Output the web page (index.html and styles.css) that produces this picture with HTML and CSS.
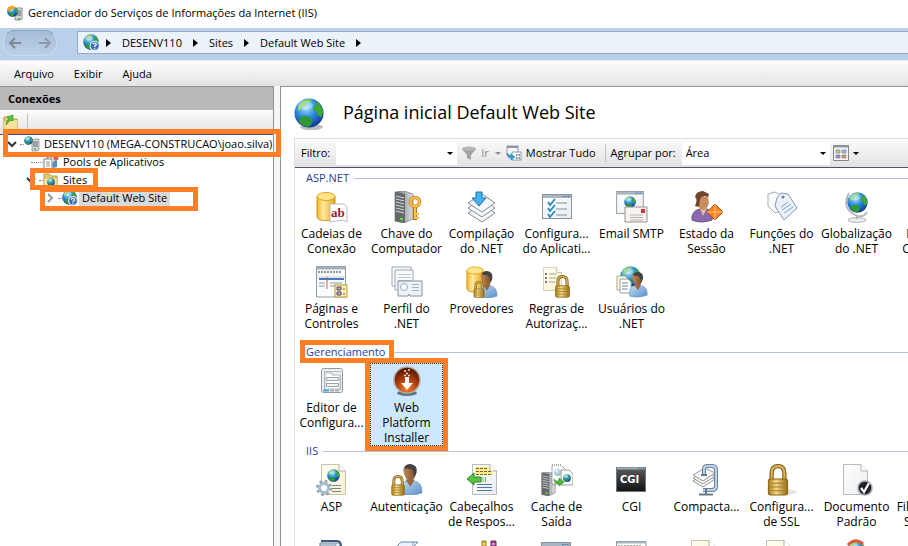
FILE: index.html
```html
<!DOCTYPE html>
<html lang="pt-BR">
<head>
<meta charset="utf-8">
<title>Gerenciador do Serviços de Informações da Internet (IIS)</title>
<link rel="stylesheet" href="styles.css">
</head>
<body>
<svg class="defs" aria-hidden="true">
  <defs>
    <radialGradient id="g-sea" cx=".4" cy=".3" r=".75"><stop offset="0" stop-color="#a9e4fb"/><stop offset=".45" stop-color="#2f8ede"/><stop offset="1" stop-color="#0c2f94"/></radialGradient>
    <linearGradient id="g-gold"><stop offset="0" stop-color="#f3b52c"/><stop offset=".35" stop-color="#ffeaa0"/><stop offset="1" stop-color="#eca414"/></linearGradient>
    <linearGradient id="g-brass"><stop offset="0" stop-color="#a87c1c"/><stop offset=".4" stop-color="#f3d98a"/><stop offset="1" stop-color="#946a12"/></linearGradient>
    <linearGradient id="g-steel"><stop offset="0" stop-color="#6d7073"/><stop offset=".5" stop-color="#a5a8aa"/><stop offset="1" stop-color="#dcdedf"/></linearGradient>
    <linearGradient id="g-shirt" x2="1" y2="1"><stop offset="0" stop-color="#c3dcf3"/><stop offset="1" stop-color="#5b8fc8"/></linearGradient>
    <linearGradient id="g-skin"><stop offset="0" stop-color="#c08a58"/><stop offset="1" stop-color="#7c4d2c"/></linearGradient>
    <linearGradient id="g-page" x2="1" y2="1"><stop offset="0" stop-color="#fff"/><stop offset="1" stop-color="#e9ecef"/></linearGradient>
    <linearGradient id="g-cream" x2="1" y2="1"><stop offset="0" stop-color="#fffef4"/><stop offset="1" stop-color="#f8f1cc"/></linearGradient>
    <linearGradient id="g-dark" x2="0" y2="1"><stop offset="0" stop-color="#5b5d5f"/><stop offset="1" stop-color="#111"/></linearGradient>
    <radialGradient id="g-rust" cx=".5" cy=".85" r=".8"><stop offset="0" stop-color="#f07a2c"/><stop offset=".55" stop-color="#a83b0c"/><stop offset="1" stop-color="#4e1806"/></radialGradient>
  </defs>
  <symbol id="globe" viewBox="0 0 32 32">
    <circle cx="16" cy="16" r="15.500" fill="url(#g-sea)"/>
    <path d="M7 6Q10 2 15 1L19 2 17 5 13 4 13 8 9 9 8 12 4 14Q3 10 7 6Z" fill="#7fcf55"/>
    <path d="M23 3Q30 7 31 15L29 21 26 19 24 14 20 13 21 9 24 8Z" fill="#3fa535"/>
    <path d="M7 20L14 19 20 24 18 29 14 31Q7 29 5 24Z" fill="#2f9a33"/>
    <ellipse cx="12" cy="8" rx="8" ry="5" fill="#fff" opacity=".3"/>
  </symbol>
  <symbol id="question" viewBox="0 0 16 16">
    <circle cx="8" cy="8" r="7" fill="#3f66b8" stroke="#dce8f8" stroke-width="2"/>
    <path d="M5.500 6Q5.500 4 8 4T10.500 6Q10.500 7.500 8 8.500V10M8 11V13" fill="none" stroke="#fff" stroke-width="1.800"/>
  </symbol>
  <symbol id="site" viewBox="0 0 16 16">
    <use href="#globe" width="15" height="15" y="0"/><use href="#question" x="6" y="6" width="10" height="10"/>
  </symbol>
  <symbol id="server-globe" viewBox="0 0 16 16">
    <path d="M8 4L10 3H15V14L13 15H8Z" fill="#d3d6d8" stroke="#8b9094" stroke-width=".8"/>
    <path d="M9 6H14M9 8H14M9 10H14" stroke="#666b6f" stroke-width="1"/><path d="M10 13H12" stroke="#35c635" stroke-width="1.400"/>
    <use href="#globe" width="9" height="9"/>
  </symbol>
  <symbol id="lock" viewBox="0 0 20 30">
    <path d="M4 15V9Q4 2 10 2T16 9V15" fill="none" stroke="#7a5a12" stroke-width="4"/>
    <path d="M4 15V9Q4 2 10 2T16 9V15" fill="none" stroke="#d9b458" stroke-width="2"/>
    <rect x="1" y="14" width="18" height="15" rx="2" fill="url(#g-brass)" stroke="#8c6412"/>
    <path d="M1 18H19M1 21.500H19M1 25H19" stroke="#a97f24"/>
  </symbol>
  <symbol id="cylinder" viewBox="0 0 20 30">
    <path d="M1 5V25Q1 29 10 29T19 25V5Z" fill="url(#g-gold)" stroke="#d4930f"/>
    <ellipse cx="10" cy="5" rx="9" ry="4" fill="#ffe48a" stroke="#e3a51e"/>
  </symbol>
  <symbol id="person" viewBox="0 0 24 30">
    <path d="M2 29Q0 18 9 16L15 16Q24 18 23 28Q12 32 2 29Z" fill="url(#g-shirt)" stroke="#6c94bf" stroke-width=".6"/>
    <path d="M7 15L12 22 16 15Z" fill="#9a673d"/>
    <path d="M5 6Q5 1 11 1T17 7Q17 16 11 17Q6 14 5 6Z" fill="url(#g-skin)"/>
    <path d="M6 4Q7 0 12 0Q19 1 18 8L16 13Q15 7 13 5Z" fill="#454240"/>
  </symbol>
  <symbol id="window" viewBox="0 0 30 25">
    <rect x=".5" y=".5" width="29" height="24" fill="url(#g-page)" stroke="#8b959f"/>
    <rect x="1" y="1" width="28" height="3" fill="#a9b6c2"/><path d="M21 2.500H28" stroke="#3c70a8" stroke-dasharray="1.500 1"/>
  </symbol>
  <symbol id="page" viewBox="0 0 25 31">
    <path d="M.5 .5H18L24.500 7V30.500H.5Z" fill="url(#g-page)" stroke="#b8bcc0"/><path d="M18 .5V7H24.500" fill="#fff" stroke="#aeb2b6"/>
  </symbol>
  <symbol id="cream-page" viewBox="0 0 25 31">
    <path d="M.5 .5H18L24.500 7V30.500H.5Z" fill="url(#g-cream)" stroke="#c4c1ac"/><path d="M18 .5V7H24.500" fill="#fff" stroke="#b6b3a0"/>
  </symbol>
  <symbol id="server" viewBox="0 0 20 32">
    <path d="M1 1L10 0 19 3V28L10 32 1 30Z" fill="url(#g-steel)" stroke="#777b7e" stroke-width=".7"/>
    <path d="M1 1L11 3V32L1 30Z" fill="#65696c"/>
    <path d="M2 5L10 7M2 8L10 10M2 11L10 13M2 14L10 16M2 17L10 19M2 20L10 22" stroke="#d5d8da"/>
    <rect x="6" y="27" width="3" height="2" fill="#53e332"/>
  </symbol>
</svg>

<header>
  <div class="titlebar">
    <svg class="i16" viewBox="0 0 16 16"><path d="M8 4L10 3H15V14L13 15H8Z" fill="#d3d6d8" stroke="#8b9094"/><path d="M9 6H14M9 8H14M9 10H14" stroke="#63686c"/><path d="M11 14H13" stroke="#35c635" stroke-width="2"/><use href="#globe" y="1" width="11" height="11"/><path d="M0 4Q2 0 7 1L9 3 5 4 3 7Z" fill="#f3a72c"/></svg>
    <span>Gerenciador do Serviços de Informações da Internet (IIS)</span>
  </div>
  <nav class="navbar" aria-label="Navegação">
    <div class="history">
      <button aria-label="Voltar"><svg viewBox="0 0 14 14"><path d="M13 7H2M7 2L2 7 7 12" fill="none" stroke="#7d8790" stroke-width="2"/></svg></button>
      <button aria-label="Avançar"><svg viewBox="0 0 14 14"><path d="M1 7H12M7 2L12 7 7 12" fill="none" stroke="#909ba6" stroke-width="2"/></svg></button>
    </div>
    <div class="address">
      <svg class="i17"><use href="#site"/></svg>
      <svg class="sep" viewBox="0 0 5 8"><path d="M0 0L5 4 0 8Z"/></svg>
      <a href="#">DESENV110</a>
      <svg class="sep" viewBox="0 0 5 8"><path d="M0 0L5 4 0 8Z"/></svg>
      <a href="#">Sites</a>
      <svg class="sep" viewBox="0 0 5 8"><path d="M0 0L5 4 0 8Z"/></svg>
      <a href="#">Default Web Site</a>
      <svg class="sep" viewBox="0 0 5 8"><path d="M0 0L5 4 0 8Z"/></svg>
    </div>
  </nav>
  <div class="menubar">
    <button>Arquivo</button><button>Exibir</button><button>Ajuda</button>
  </div>
</header>

<div class="workspace">
  <aside class="connections">
    <h2>Conexões</h2>
    <div class="tree-tools">
      <button aria-label="Subir um nível"><svg class="i16" viewBox="0 0 16 16"><path d="M1 3H6L8 5H14V15H1Z" fill="#e6c96e" stroke="#b8963c"/><path d="M1 8L14 6V15H1Z" fill="#f6e3a0"/><path d="M3 11Q3 6 6 5L4 3 10 1 10 7 8 6Q5 8 3 11Z" fill="#5cc23c" stroke="#2f8a26" stroke-width=".6"/></svg></button>
    </div>
    <ul class="tree">
      <li class="row">
        <button class="toggle" aria-label="Recolher"><svg viewBox="0 0 10 10"><path d="M1 3L5 7 9 3" stroke="#333"/></svg></button>
        <i class="dots"></i><svg class="i16"><use href="#server-globe"/></svg>
        <span class="label">DESENV110 (MEGA-CONSTRUCAO\joao.silva)</span>
        <i class="mark mark-server"></i>
      </li>
      <li class="row level1">
        <i class="dots long"></i>
        <svg class="i16" viewBox="0 0 16 16"><path d="M4 3H12V11H4Z" fill="#eef1f4" stroke="#84898e"/><path d="M1 5H9V15H1Z" fill="#fff" stroke="#75797d"/><path d="M3 8H7M3 10H7M3 12H7" stroke="#8a9299"/><circle cx="13" cy="4" r="2.500" fill="#d36258"/><path d="M14 6V13L10 14V8Z" fill="#538ec2"/></svg>
        <span class="label">Pools de Aplicativos</span>
      </li>
      <li class="row level1">
        <button class="toggle" aria-label="Recolher"><svg viewBox="0 0 10 10"><path d="M1 3L5 7 9 3" stroke="#333"/></svg></button>
        <i class="dots"></i>
        <svg class="i16" viewBox="0 0 16 16"><path d="M1 2H6L8 4H14V14H1Z" fill="#e8ca72" stroke="#bb9741"/><path d="M1 6H14V14H1Z" fill="#f8e5a5" stroke="#c9a954" stroke-width=".6"/><use href="#globe" x="4" y="6" width="8" height="8"/></svg>
        <span class="label">Sites</span>
        <i class="mark mark-sites"></i>
      </li>
      <li class="row level2">
        <button class="toggle" aria-label="Expandir"><svg viewBox="0 0 10 10"><path d="M3 1L7 5 3 9" stroke="#999"/></svg></button>
        <i class="dots"></i><svg class="i16"><use href="#site"/></svg>
        <span class="label selected">Default Web Site</span>
        <i class="mark mark-default"></i>
      </li>
    </ul>
  </aside>

  <main>
    <div class="heading">
      <svg class="big-globe" viewBox="0 0 32 34"><ellipse cx="18" cy="30" rx="12" ry="3" fill="#bbb"/><use href="#globe" width="31" height="31"/></svg>
      <h1>Página inicial Default Web Site</h1>
    </div>
    <section class="features">
      <div class="toolbar">
        <label for="filter">Filtro:</label>
        <span class="combo filter"><input id="filter" type="text"><svg viewBox="0 0 6 3"><path d="M0 0H6L3 3Z"/></svg></span>
        <button class="go" disabled><svg class="i16" viewBox="0 0 16 16"><ellipse cx="8" cy="4" rx="7" ry="2.500" fill="#b5b5b5"/><path d="M1 4Q8 8 15 4L10 10V15L6 13V10Z" fill="#a2a2a2"/></svg><span>Ir</span><svg class="caret grey" viewBox="0 0 6 3"><path d="M0 0H6L3 3Z"/></svg></button>
        <button class="all"><svg class="i16" viewBox="0 0 16 16"><path d="M1 1H12V10H1Z" fill="#f5f8fa" stroke="#8b98a4"/><path d="M1 2H12" stroke="#8b98a4" stroke-width="2"/><path d="M6 7H15V15H6Z" fill="#fff" stroke="#8b98a4"/><path d="M10 10H14M10 13H14" stroke="#4d79ad" stroke-width="1.500" stroke-dasharray="1.500 1"/><path d="M1 8Q2 11 5 11V9L9 12 5 15V13Q1 13 1 8Z" fill="#31a5dd" stroke="#1878b0" stroke-width=".5"/></svg><span>Mostrar Tudo</span></button>
        <label class="group-label" for="groupby">Agrupar por:</label>
        <span class="combo groupby"><select id="groupby"><option>Área</option></select><svg viewBox="0 0 6 3"><path d="M0 0H6L3 3Z"/></svg></span>
        <button class="view" aria-label="Modo de exibição"><svg class="i16" viewBox="0 0 16 16"><path d="M.5 .5H15.500V15.500H.5Z" fill="#f4f4f4" stroke="#82878c"/><path d="M1 1.500H15" stroke="#8e979f" stroke-width="2"/><path d="M3 5H7V8H3Z" fill="#b5d08c" stroke="#777" stroke-width=".6"/><path d="M9 5H13V8H9Z" fill="#8cc8e0" stroke="#777" stroke-width=".6"/><path d="M3 10H7V13H3Z" fill="#9c90d4" stroke="#777" stroke-width=".6"/><path d="M9 10H13V13H9Z" fill="#e89870" stroke="#777" stroke-width=".6"/></svg><svg class="caret" viewBox="0 0 6 3"><path d="M0 0H6L3 3Z"/></svg></button>
      </div>

      <div class="groups">
        <section class="group">
          <h3><span>ASP.NET</span></h3>
          <ul class="grid">
            <li><svg viewBox="0 0 32 32"><use href="#cylinder" x="0" y="0" width="20" height="31"/><path d="M14 13H28L31 16V31L27 29 14 31Z" fill="#fff" stroke="#b5babf"/><text class="t-ab" x="15" y="26">ab</text></svg><span>Cadeias de<br>Conexão</span></li>
            <li><svg viewBox="0 0 32 32"><use href="#server" x="3" width="20" height="32"/><path d="M24 15V29" stroke="#bc7612" stroke-width="4"/><path d="M24 15V28M25 23H28M25 27H28" stroke="#ffc34b" stroke-width="2"/><circle cx="24" cy="11" r="4.500" fill="none" stroke="#c57b12" stroke-width="3.500"/><circle cx="24" cy="11" r="4.500" fill="none" stroke="#ffc552" stroke-width="2"/></svg><span>Chave do<br>Computador</span></li>
            <li><svg viewBox="0 0 32 32"><g fill="#f7f8f9" stroke="#84898d"><path d="M2 22L16 13 29 22 16 31Z"/><path d="M2 17L16 8 29 17 16 26Z"/><path d="M2 12L16 3 29 12 16 21Z"/></g><path d="M10 1H16V7H20L13 15 6 7H10Z" fill="#46b0eb" stroke="#1872b8"/></svg><span>Compilação<br>do .NET</span></li>
            <li><svg viewBox="0 0 32 32"><use href="#window" x="1" y="3" width="30" height="25"/><path d="M15 12H26M15 18H26M15 24H26" stroke="#7c91a6"/><path d="M7 11L9 14 14 8M7 17L9 20 14 14M7 23L9 26 14 20" fill="none" stroke="#278ac1" stroke-width="1.800"/></svg><span>Configura...<br>do Aplicati...</span></li>
            <li><svg viewBox="0 0 32 32"><use href="#window" x="0" y="0" width="28" height="23"/><use href="#globe" x="8" y="5" width="12" height="12"/><path d="M9 16H31V31H9Z" fill="#f5f4f2" stroke="#99938c"/><path d="M14 24H27M14 26.500H27M14 29H27" stroke="#b8b4b0"/><rect x="25" y="18" width="4" height="4" fill="#de3431"/></svg><span>Email SMTP</span></li>
            <li><svg viewBox="0 0 32 32"><path d="M1 29Q0 20 9 18L16 18Q23 21 21 29Q10 33 1 29Z" fill="#8c69ae" stroke="#6d4c8f"/><path d="M9 17L12 25 16 17Z" fill="#e8c39a"/><path d="M7 6H17L18 12Q16 19 12 19T7 12Z" fill="#c58d5c"/><path d="M4 15Q7 8 4 6Q5 0 12 0L18 3 17 6Q11 4 9 8L8 16Z" fill="#70452b"/><path d="M24 13L32 21 24 29 16 21Z" fill="#f88423" stroke="#b9500d"/><path d="M24 13V29M16 21H32" stroke="#ffc184"/></svg><span>Estado da<br>Sessão</span></li>
            <li><svg viewBox="0 0 32 32"><path d="M2 3L9 1 17 5 15 20 9 22 2 15Z" fill="#f8fafb" stroke="#a4adb5"/><path d="M11 7L15 2 22 3 31 17 18 29 9 15Z" fill="#eaf1f8" stroke="#8199b0"/><path d="M15 16L22 11M16 19L25 13M18 22L27 16" stroke="#7ba2ca"/><circle cx="17" cy="6" r="1.500" fill="#6e8091"/></svg><span>Funções do<br>.NET</span></li>
            <li><svg viewBox="0 0 32 32"><ellipse cx="16" cy="29" rx="9" ry="2.500" fill="#e9ebec" stroke="#b4b7b9"/><path d="M8 2Q1 15 11 22T26 21M16 24V28" fill="none" stroke="#b5b9bc" stroke-width="2"/><use href="#globe" x="6" y="1" width="21" height="21"/></svg><span>Globalização<br>do .NET</span></li>
            <li><svg viewBox="0 0 32 32"><use href="#page" x="4" width="25" height="31"/></svg><span>Níveis de<br>Confianç...</span></li>
            <li><svg viewBox="0 0 32 32"><path d="M.5 .5H29.500V31H.5Z" fill="#fafbfb" stroke="#929ca5"/><path d="M1 2H29" stroke="#a0afbd" stroke-width="3"/><path d="M2 6H25" stroke="#8d969e" stroke-width="2" stroke-dasharray="2 1"/><path d="M1 11H29" stroke="#c5cbd1"/><path d="M3 13H28" stroke="#4678c4" stroke-width="2"/><path d="M11 11V23" stroke="#e05742" stroke-width="1"/><path d="M3 17H9M3 20H9M14 17H26M14 20H20" stroke="#8d969e"/><rect x="19" y="19" width="12" height="12" fill="#fff3b2" stroke="#ba9732"/><path d="M21 21H25V24H21ZM21 26H25V29H21Z" fill="#bcaed0" stroke="#554170"/><path d="M27 23H29M27 28H29" stroke="#715b25"/></svg><span>Páginas e<br>Controles</span></li>
            <li><svg viewBox="0 0 32 32"><path d="M1 1H20V20H1Z" fill="#f8f9fa" stroke="#a2a8ad"/><path d="M4 4H22V24H4Z" fill="#f8f9fa" stroke="#a2a8ad"/><path d="M7 8.500H20M7 11.500H20M7 14.500H20M7 17.500H20" stroke="#c1c6ca"/><path d="M7 15H31V30H19L18 28 17 30H7Z" fill="#edf2f6" stroke="#8094a6"/><circle cx="13" cy="21" r="3.500" fill="#fff" stroke="#96a9ba"/><path d="M21 18.500H28M21 21.500H28M21 24.500H28" stroke="#a0b2c2"/></svg><span>Perfil do<br>.NET</span></li>
            <li><svg viewBox="0 0 32 32"><use href="#cylinder" width="18" height="27"/><use href="#person" x="10" y="5" width="22" height="27"/><use href="#lock" x="7" y="15" width="12" height="17"/></svg><span>Provedores</span></li>
            <li><svg viewBox="0 0 32 32"><use href="#cream-page" x="2" width="19" height="26"/><path d="M4 8H6M4 12H6M4 16H6" stroke="#777" stroke-width="2"/><path d="M8 8H15M8 12H15M8 16H14" stroke="#a5a497"/><use href="#lock" x="13" y="9" width="17" height="23"/></svg><span>Regras de<br>Autorizaç...</span></li>
            <li><svg viewBox="0 0 32 32"><use href="#globe" x="4" width="21" height="21"/><path d="M1 10H9L12 13V24H1Z" fill="#fff9e0" stroke="#aaa68c"/><path d="M4 13H12L15 16V27H4Z" fill="#fff" stroke="#9a9f9f"/><path d="M6 17H12M6 20H12M6 23H12" stroke="#6d8aaa"/><use href="#person" x="12" y="5" width="20" height="27"/></svg><span>Usuários do<br>.NET</span></li>
          </ul>
        </section>

        <section class="group">
          <h3><span>Gerenciamento</span><i class="mark mark-group"></i></h3>
          <ul class="grid">
            <li><svg viewBox="0 0 32 32"><rect x="5.500" y="3.500" width="21" height="24" rx="2" fill="#edf0f2" stroke="#92999f"/><path d="M8 6.500H25M8.500 7V25M24.500 10V25" stroke="#b4babf"/><path d="M9 8H16V10H24V24H9Z" fill="#fff" stroke="#b4babf"/><path d="M10.500 12.500H22.500V15.500H10.500ZM10.500 18.500H22.500V21.500H10.500Z" fill="#eff2f3" stroke="#9ca5ac"/><path d="M7 25.500H13" stroke="#37add3" stroke-width="2"/><path d="M14 25.500H24" stroke="#a7adb2" stroke-width="2" stroke-dasharray="4 1"/></svg><span>Editor de<br>Configura...</span></li>
            <li class="chosen"><svg viewBox="0 0 32 32"><ellipse cx="16" cy="28" rx="10" ry="3" fill="#39424d" opacity=".7"/><circle cx="16" cy="15" r="13" fill="url(#g-rust)" stroke="#b7a9a2" stroke-width="1.500"/><path d="M14 12H18V18H22L16 25 10 18H14Z" fill="#fff"/><path d="M13 6H15M17 5H19M15 8.500H17M13 10.500H15M17 10.500H19" stroke="#ffd6b8" stroke-width="1.500"/></svg><span>Web<br>Platform<br>Installer</span><i class="mark mark-chosen"></i></li>
          </ul>
        </section>

        <section class="group">
          <h3><span>IIS</span></h3>
          <ul class="grid">
            <li><svg viewBox="0 0 32 32"><use href="#cream-page" x="5" width="25" height="31"/><use href="#globe" x="11" y="5" width="13" height="13"/><path d="M16 21.500H25M16 24.500H25M16 27.500H25" stroke="#78858d"/><circle cx="8" cy="24" r="6.500" fill="none" stroke="#8aa1b4" stroke-width="3" stroke-dasharray="2.500 2.600"/><circle cx="8" cy="24" r="4.500" fill="#fff" stroke="#a9bccb" stroke-width="3"/></svg><span>ASP</span></li>
            <li><svg viewBox="0 0 32 32"><use href="#person" x="7" width="25" height="31"/><use href="#lock" x="0" y="11" width="14" height="21"/></svg><span>Autenticação</span></li>
            <li><svg viewBox="0 0 32 32"><use href="#page" x="6" width="25" height="31"/><path d="M9 3H23V7H27V11H9Z" fill="#ffec80"/><path d="M10 4.500H22M10 7.500H26M10 10.500H26" stroke="#6b663c" stroke-dasharray="3 1"/><path d="M11 20.500H26M11 23.500H26M11 26.500H26" stroke="#4c7ca6"/><path d="M1 15L8 9V13H15V18H8V21Z" fill="#59c440" stroke="#31862a"/><path d="M17 13V18M19.500 13V18" stroke="#5fbe49"/></svg><span>Cabeçalhos<br>de Respos...</span></li>
            <li><svg viewBox="0 0 32 32"><use href="#server" x="0" y="8" width="15" height="24"/><path d="M11 1H20L24 5V20H11Z" fill="#fff" stroke="#555" stroke-dasharray="1 1"/><use href="#globe" x="13" y="5" width="7" height="7" opacity=".4"/><path d="M20 6H28L32 10V21H20Z" fill="#fafafa" stroke="#9b9fa3"/><use href="#globe" x="22" y="10" width="8" height="8"/><path d="M13 15Q14 18 18 17V14L23 18 18 22V20Q13 20 13 15Z" fill="#52b83c" stroke="#31852b" stroke-width=".7"/></svg><span>Cache de<br>Saída</span></li>
            <li><svg viewBox="0 0 32 32"><rect x=".5" y="3.500" width="29" height="24" fill="url(#g-dark)" stroke="#6c777f"/><path d="M1 4.500H29" stroke="#a2acb5" stroke-width="2"/><path d="M22 4.500H29" stroke="#457cb2" stroke-dasharray="1.500 1"/><text class="t-cgi" x="4" y="19">CGI</text></svg><span>CGI</span></li>
            <li><svg viewBox="0 0 32 32"><g fill="#f6f7f7" stroke="#93979b"><path d="M2 17L14 10 24 15 12 23Z"/><path d="M2 14L14 7 24 12 12 20Z"/><path d="M2 11L14 4 24 9 12 17Z"/></g><path d="M13 10V5Q13 2 17 2H21Q25 2 25 6V22Q25 26 21 26H12" fill="none" stroke="#546c8b" stroke-width="4"/><path d="M13 10V5Q13 2 17 2H21Q25 2 25 6V22Q25 26 21 26H12" fill="none" stroke="#bccfe4" stroke-width="2.500"/><path d="M15 25V30M8 30.500H22M10 11H16" stroke="#6b7a8c" stroke-width="2"/></svg><span>Compacta...</span></li>
            <li><svg viewBox="0 0 32 32"><ellipse cx="22" cy="28" rx="9" ry="2.500" fill="#e4e4e4"/><use href="#lock" x="1" y="0" width="22" height="32"/></svg><span>Configura...<br>de SSL</span></li>
            <li><svg viewBox="0 0 32 32"><use href="#page" x="2" width="25" height="31"/><circle cx="24" cy="24" r="7" fill="#202123" stroke="#a6a9ad" stroke-width="1.500"/><path d="M20 24L23 28 28 19" fill="none" stroke="#fff" stroke-width="2.200"/></svg><span>Documento<br>Padrão</span></li>
            <li><svg viewBox="0 0 32 32"><use href="#page" x="6" width="25" height="31"/></svg><span>Filtragem de<br>Solicitaç...</span></li>
            <li><svg viewBox="0 0 32 32"><path d="M4 4H24V32H4Z" fill="#e9eef4" stroke="#69788d"/><path d="M5 2H21Q25 2 25 7V32" fill="none" stroke="#405982" stroke-width="2"/><path d="M4 6H20V32" fill="none" stroke="#7f91aa"/></svg></li>
            <li><svg viewBox="0 0 32 32"><path d="M10 3H27L22 8V32H5V8Z" fill="#e9f2fa" stroke="#6989a8"/><path d="M22 3V8H10" fill="none" stroke="#7e9ab4"/></svg></li>
            <li><svg viewBox="0 0 32 32"><path d="M16 2H20V32H16Z" fill="#e0b52d" stroke="#9c7c19"/><path d="M25 2H30V32H25Z" fill="#a23e91" stroke="#70265f"/><path d="M17 5H19M26 5H29" stroke="#fff"/></svg></li>
            <li><svg viewBox="0 0 32 32"><use href="#window" y="3" width="30" height="25"/></svg></li>
            <li><svg viewBox="0 0 32 32"><path d="M.5 2.500H30V32H.5Z" fill="#fff" stroke="#8b959f"/><path d="M1 3.500H30" stroke="#a9b6c2" stroke-width="2"/><path d="M2 6.500H25" stroke="#a6a9a0" stroke-dasharray="2 1"/></svg></li>
            <li><svg viewBox="0 0 32 32"><use href="#cream-page" x="0" y="1" width="25" height="31"/></svg></li>
            <li><svg viewBox="0 0 32 32"><use href="#cream-page" x="0" y="1" width="25" height="31"/></svg></li>
            <li><svg viewBox="0 0 32 32"><use href="#globe" x="5" y="2" width="20" height="20"/><path d="M7 6Q14 -2 22 5" fill="none" stroke="#e2583c" stroke-width="3"/></svg></li>
          </ul>
        </section>
      </div>
    </section>
  </main>
</div>
</body>
</html>
```

FILE: styles.css
```css
* { box-sizing: border-box; }

body {
  margin: 0;
  height: 100vh;
  display: flex;
  flex-direction: column;
  overflow: hidden;
  background: #f5f4f6;
  color: #000;
  font: 12px/18px "Segoe UI", "Open Sans", "Noto Sans", sans-serif;
}

button, input, select {
  margin: 0;
  padding: 0;
  border: 0;
  background: none;
  color: inherit;
  font: inherit;
}

ul { margin: 0; padding: 0; list-style: none; }
h1, h2, h3 { margin: 0; font-weight: normal; }
svg { display: block; flex: none; }
a { color: inherit; text-decoration: none; }

.defs { position: absolute; width: 0; height: 0; }
.i16 { width: 16px; height: 16px; }
.i17 { width: 17px; height: 17px; }

header, .toolbar, .connections h2, .tree, .group h3 { font-size: 11px; }

.titlebar {
  display: flex;
  align-items: center;
  gap: 5px;
  height: 28px;
  padding: 0 7px 2px;
  background: #fff;
}

.navbar {
  display: flex;
  align-items: center;
  gap: 20px;
  height: 33px;
  padding: 0 0 3px 3px;
  background: #b9d0eb;
  border-bottom: 1px solid #e6edf5;
}

.history {
  display: flex;
  align-items: center;
  justify-content: space-between;
  width: 54px;
  height: 26px;
  padding: 0 4px;
  border-radius: 12px;
  background: linear-gradient(#a5bcd8, #bbd0e8);
  border: 1px solid #cbdcef;
  border-top-color: #8da4c0;
}
.history svg { width: 14px; height: 14px; }

.address {
  flex: 1;
  display: flex;
  align-items: center;
  height: 23px;
  padding-left: 5px;
  background: #ebf2fa;
  border: 1px solid #98a9bf;
  border-right: 0;
}
.sep { width: 5px; height: 8px; margin: 0 11px; }
.address .i17 + .sep { margin-left: 6px; }

.menubar {
  display: flex;
  gap: 20px;
  height: 25px;
  padding: 0 14px;
  background: linear-gradient(#fdfdfd, #e4e3e4);
}

.workspace {
  flex: 1;
  min-height: 0;
  display: flex;
  gap: 6px;
}

.connections {
  flex: none;
  width: 274px;
  display: flex;
  flex-direction: column;
  border: 1px solid #929192;
  border-width: 1px 1px 0 0;
  background: #fff;
}
.connections h2 {
  height: 23px;
  padding: 3px 8px;
  background: #bab8ba;
  font-weight: bold;
}
.tree-tools {
  display: flex;
  align-items: center;
  height: 25px;
  padding-left: 3px;
  background: linear-gradient(#fcfcfc, #e4e2e4);
  border-bottom: 1px solid #4f4f70;
}
.tree-tools button {
  padding-right: 8px;
  border-right: 1px solid #c4c4b4;
}

.row {
  position: relative;
  display: flex;
  align-items: center;
  height: 18px;
  padding-left: 4px;
}
.level1 { padding-left: 23px; }
.level2 { padding-left: 42px; }
.toggle {
  flex: none;
  display: flex;
  justify-content: center;
  width: 16px;
}
.toggle svg { width: 10px; height: 10px; }
.toggle path { fill: none; stroke-width: 2; }
.dots { flex: none; width: 4px; border-top: 1px dotted #888; }
.dots.long { width: 12px; margin-left: 8px; }
.label {
  padding: 0 3px;
  margin-left: 1px;
  overflow: hidden;
  white-space: nowrap;
}
.selected { background: #d9d9d9; line-height: 16px; }

/* orange callout frames drawn over the elements they point at */
.mark {
  position: absolute;
  z-index: 2;
  border: 5px solid #ff7f27;
  pointer-events: none;
}
.mark-server { inset: -6px -8px -4px 3px; }
.mark-sites { top: -3px; bottom: -1px; left: 30px; width: 68px; }
.mark-default { top: -2px; bottom: -4px; left: 40px; width: 158px; }
.mark-group { inset: -4px auto -3px 5px; width: 94px; }
.mark-chosen { inset: -4px; }

main {
  flex: 1;
  min-width: 0;
  display: flex;
  flex-direction: column;
  padding-left: 13px;
  background: #fff;
  border: 1px solid #929192;
  border-width: 1px 0 0 1px;
}
.heading {
  display: flex;
  align-items: center;
  gap: 18px;
  height: 51px;
  padding-top: 4px;
}
.big-globe { width: 31px; height: 33px; }
.heading h1 {
  padding-bottom: 5px;
  font-size: 18px;
  line-height: 24px;
}

.features {
  flex: 1;
  min-height: 0;
  display: flex;
  flex-direction: column;
  border: 1px solid #dedede;
  border-width: 1px 0 0 1px;
}
.toolbar {
  flex: none;
  display: flex;
  align-items: center;
  height: 29px;
  padding-left: 6px;
  background: linear-gradient(#fbfbfb, #e3e1e3);
  border-bottom: 1px solid #4f4f70;
  white-space: nowrap;
}
.toolbar button { display: flex; align-items: center; gap: 4px; }
.combo {
  display: flex;
  align-items: center;
  height: 23px;
  margin-left: 6px;
  padding-right: 4px;
  background: #fff;
}
.combo input, .combo select {
  flex: 1;
  min-width: 0;
  height: 100%;
  padding-left: 4px;
  appearance: none;
  outline: 0;
}
.combo svg, .caret { width: 6px; height: 3px; }
.filter { width: 121px; }
.groupby { width: 148px; }
.go { margin-left: 4px; color: #8d8d8d; }
.grey { fill: #8d8d8d; margin-left: 2px; }
.all { margin-left: 5px; }
.group-label {
  margin-left: 9px;
  padding-left: 5px;
  border-left: 1px solid #c4c4b4;
}
.view { margin-left: 3px; }

.groups {
  flex: 1;
  min-height: 0;
  display: flex;
  flex-direction: column;
  gap: 6px;
  padding-top: 2px;
  overflow: hidden;
}
.group { flex: none; }
.group h3 {
  position: relative;
  display: flex;
  align-items: center;
  gap: 5px;
  margin-bottom: 2px;
  padding-left: 11px;
  line-height: 16px;
  color: #1e3f9c;
}
.group h3::after {
  content: "";
  flex: 1;
  border-top: 1px solid #b4c0de;
}
.grid {
  display: grid;
  grid-template-columns: repeat(9, 75px);
  grid-auto-rows: 75px;
  margin-left: -1px;
}
.grid li {
  position: relative;
  display: flex;
  flex-direction: column;
  align-items: center;
  gap: 3px;
  align-self: start;
  padding-top: 3px;
  line-height: 15px;
  text-align: center;
  white-space: nowrap;
}
.grid svg { width: 32px; height: 32px; }
.grid .chosen {
  padding-bottom: 2px;
  background: #cce8ff;
  outline: 1px dotted #333;
  outline-offset: -2px;
}

.t-ab { font: bold 13px "Liberation Serif", serif; fill: #a01c20; }
.t-cgi { font: bold 10px "DejaVu Sans", sans-serif; fill: #fff; }
```
